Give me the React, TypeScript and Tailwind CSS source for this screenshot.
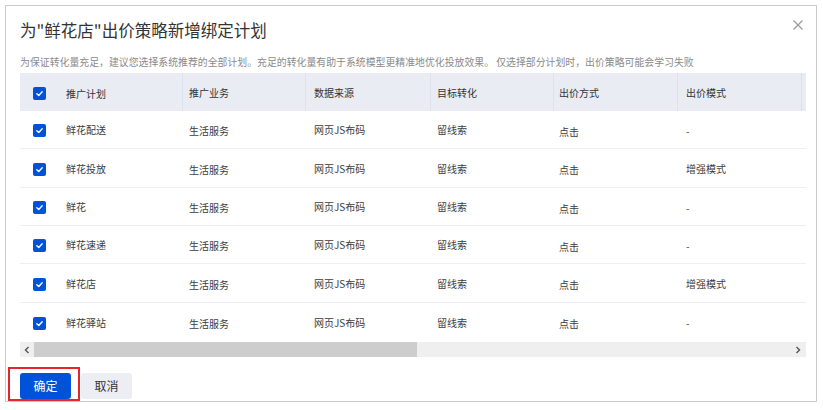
import React from "react";

const rows = [
  { name: "鲜花配送", mode: "-", h: "h-[38px]" },
  { name: "鲜花投放", mode: "增强模式", h: "h-[39px]" },
  { name: "鲜花", mode: "-", h: "h-[38px]" },
  { name: "鲜花速递", mode: "-", h: "h-[38px]" },
  { name: "鲜花店", mode: "增强模式", h: "h-[39px]" },
  { name: "鲜花驿站", mode: "-", h: "h-[38px]" },
];

function Check() {
  return (
    <span className="flex h-[13px] w-[13px] shrink-0 items-center justify-center rounded-[2px] bg-[#0052d9]">
      <svg width="9" height="9" viewBox="0 0 10 10" fill="none">
        <path d="M2 5.2 L4.2 7.2 L8 3" stroke="white" strokeWidth="1.5" strokeLinecap="round" strokeLinejoin="round" />
      </svg>
    </span>
  );
}

export default function App() {
  return (
    <div
      className="h-[410px] w-[823px] bg-white pl-[5px] pt-[5px]"
      style={{ fontFamily: '"Noto Sans CJK SC", "Noto Sans", sans-serif' }}
    >
      <div className="relative h-[397px] w-[812px] border border-[#cccccc] pl-[14px] pt-[12px]">
        <div className="h-[24px] text-[16.5px] leading-[24px] text-[#333]">为"鲜花店"出价策略新增绑定计划</div>
        <button className="absolute right-[13px] top-[14px] flex h-[10px] w-[10px] items-center justify-center">
          <svg width="10" height="10" viewBox="0 0 10 10">
            <path d="M0.5 0.5 L9.5 9.5 M9.5 0.5 L0.5 9.5" stroke="#9a9a9a" strokeWidth="1.2" />
          </svg>
        </button>
        <div className="mt-[12px] h-[16px] whitespace-nowrap text-[9.9px] leading-[16px] text-[#8a8a8a]">
          为保证转化量充足，建议您选择系统推荐的全部计划。充足的转化量有助于系统模型更精准地优化投放效果。 仅选择部分计划时，出价策略可能会学习失败
        </div>

        <div className="mt-[3px] w-[786px] overflow-hidden">
          <div className="flex h-[38px] w-[900px] bg-[#e9ecf3] text-[10px] text-[#333]">
            <div className="flex w-[163px] items-center border-r border-[#dde1ea] pl-[13px] pt-[2px]">
              <Check />
              <span className="ml-[20px]">推广计划</span>
            </div>
            <div className="flex w-[123px] items-center border-r border-[#dde1ea] pl-[6px]">推广业务</div>
            <div className="flex w-[125px] items-center border-r border-[#dde1ea] pl-[8px]">数据来源</div>
            <div className="flex w-[123px] items-center border-r border-[#dde1ea] pl-[6px]">目标转化</div>
            <div className="flex w-[124px] items-center border-r border-[#dde1ea] pl-[5px]">出价方式</div>
            <div className="flex w-[124px] items-center border-r border-[#dde1ea] pl-[8px]">出价模式</div>
            <div className="flex w-[118px] items-center pl-[8px]"></div>
          </div>
          {rows.map((r, i) => (
            <div
              key={r.name}
              className={`flex w-[900px] text-[10px] text-[#3c3c3c] ${r.h} ${i < rows.length - 1 ? "border-b border-[#eceef3]" : ""}`}
            >
              <div className="flex w-[163px] items-center pl-[13px] pt-[2px]">
                <Check />
                <span className="ml-[20px] -mt-[2px]">{r.name}</span>
              </div>
              <div className="flex w-[123px] items-center pl-[6px] pt-[2px]">生活服务</div>
              <div className="flex w-[125px] items-center pl-[8px]">网页JS布码</div>
              <div className="flex w-[123px] items-center pl-[6px]">留线索</div>
              <div className="flex w-[124px] items-center pl-[5px] pt-[3px]">点击</div>
              <div className="flex w-[124px] items-center pl-[8px] pt-[1px]">{r.mode}</div>
              <div className="w-[118px]"></div>
            </div>
          ))}
          <div className="mt-[1px] flex h-[15px] w-[786px] items-center bg-[#efefef]">
            <div className="flex h-[15px] w-[14px] items-center justify-center">
              <svg width="6" height="8" viewBox="0 0 6 8">
                <path d="M4.5 1 L1.5 4 L4.5 7" stroke="#555" strokeWidth="1.4" fill="none" />
              </svg>
            </div>
            <div className="h-[15px] w-[383px] bg-[#cdcdcd]"></div>
            <div className="flex-1"></div>
            <div className="flex h-[15px] w-[16px] items-center justify-center">
              <svg width="6" height="8" viewBox="0 0 6 8">
                <path d="M1.5 1 L4.5 4 L1.5 7" stroke="#555" strokeWidth="1.4" fill="none" />
              </svg>
            </div>
          </div>
        </div>

        <div className="relative mt-[16px] flex gap-[10px]">
          <button className="h-[26px] w-[51px] rounded-[3px] bg-[#0052d9] text-[12px] text-white">确定</button>
          <button className="h-[26px] w-[51px] rounded-[3px] bg-[#eceef3] text-[12px] text-[#333]">取消</button>
          <div className="pointer-events-none absolute left-[-12px] top-[-6px] h-[34px] w-[72px] border-2 border-[#e5252a]"></div>
        </div>
      </div>
    </div>
  );
}
